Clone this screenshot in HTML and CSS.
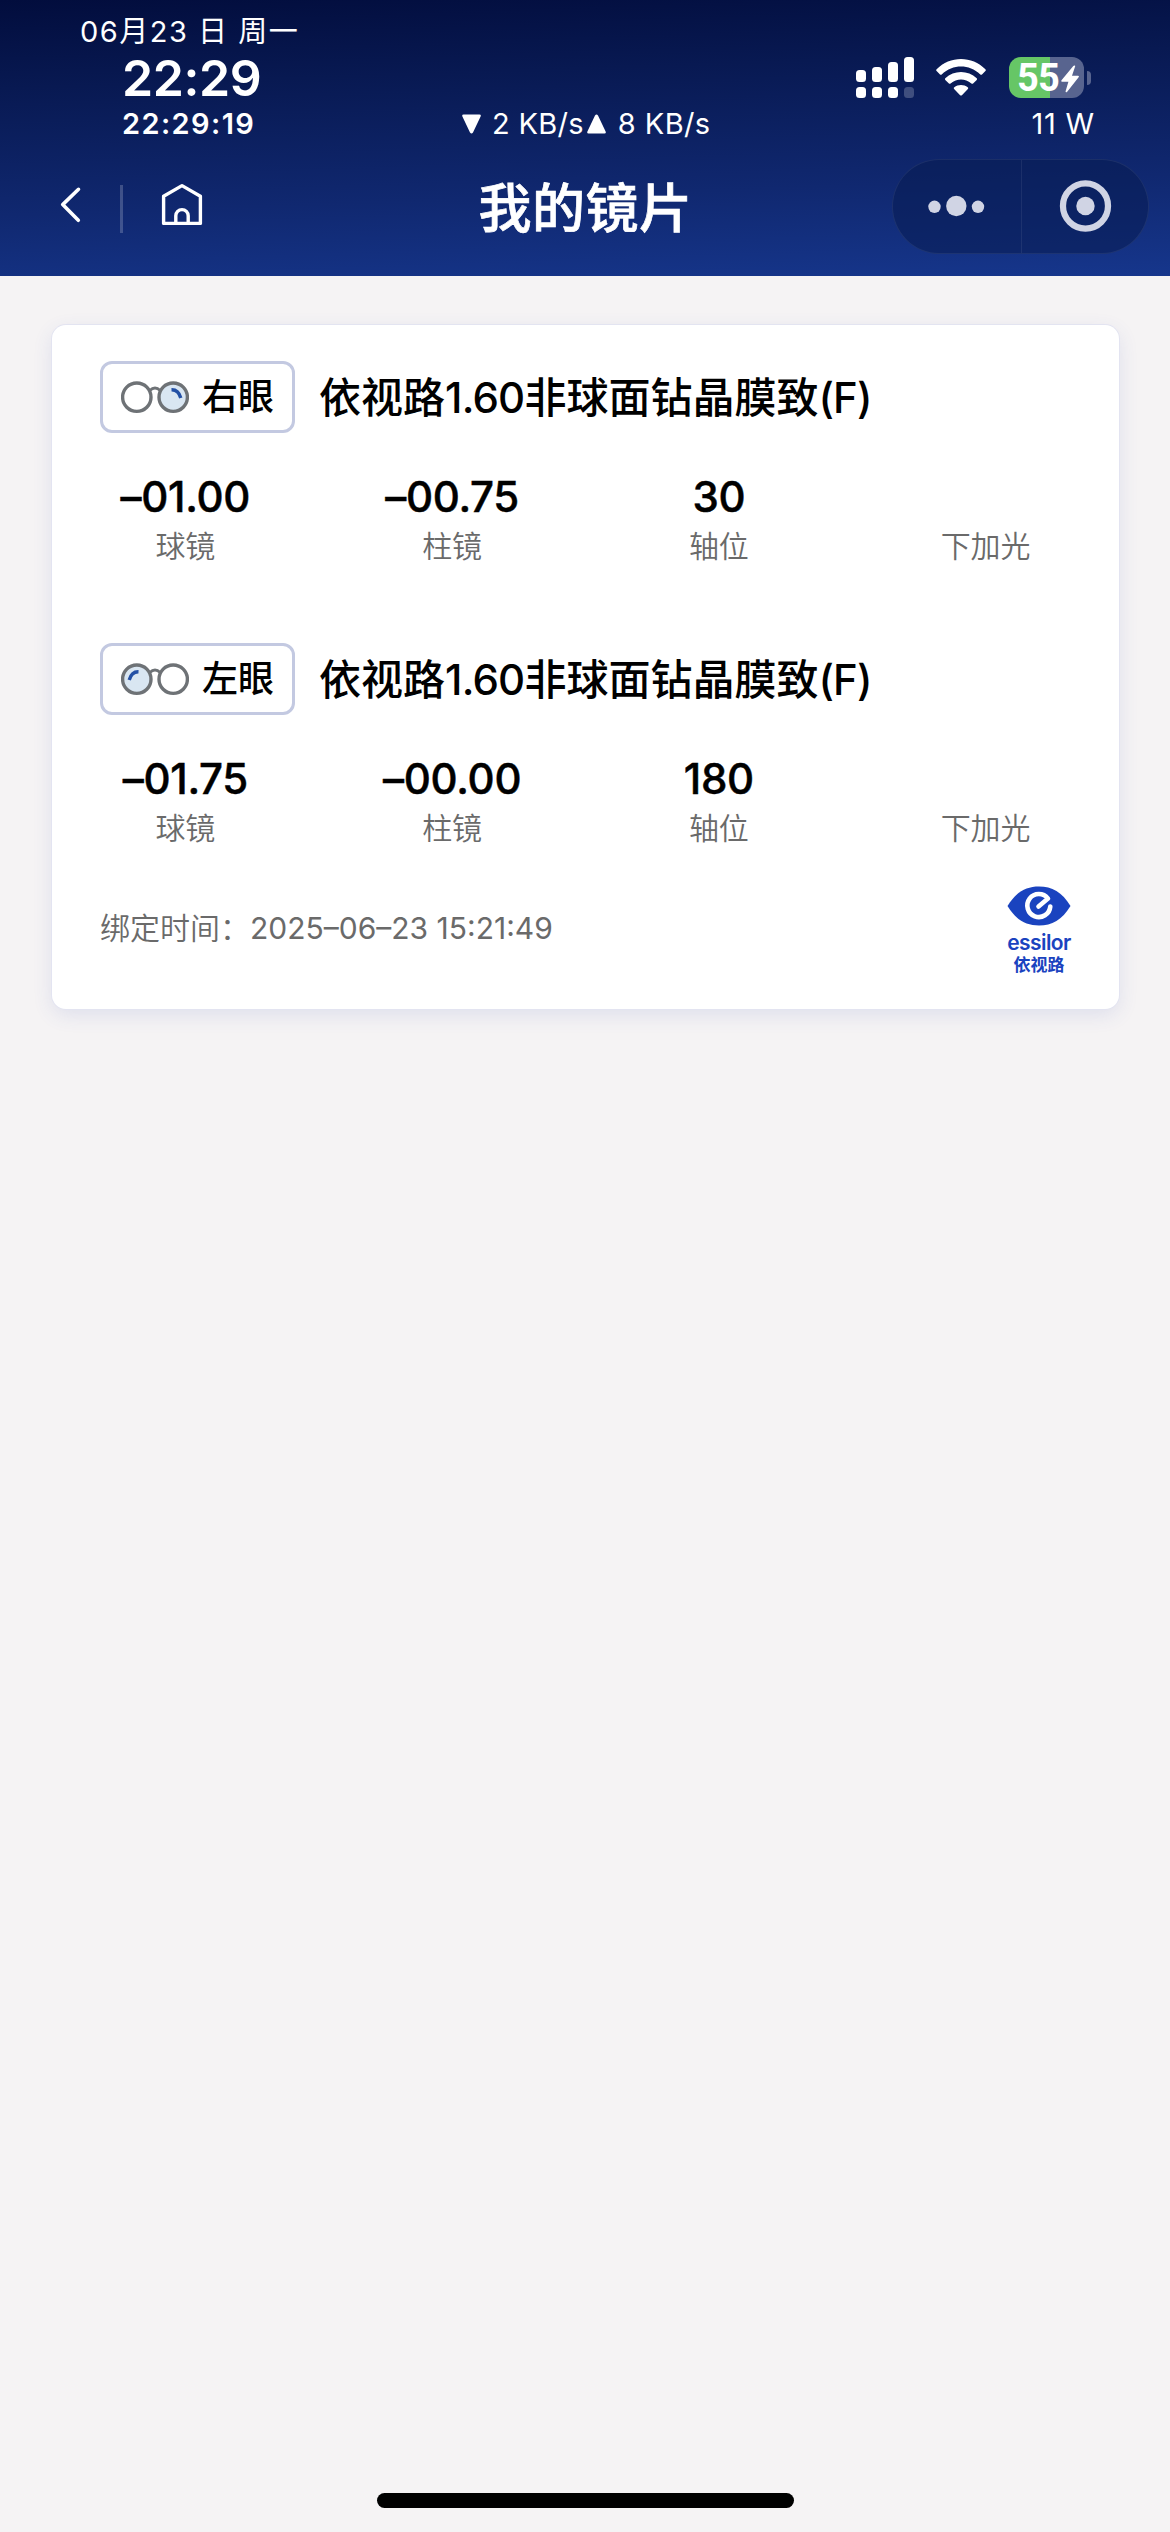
FILE: index.html
```html
<!DOCTYPE html>
<html lang="zh-CN">
<head>
<meta charset="utf-8">
<title>我的镜片</title>
<link rel="stylesheet" href="styles.css">
</head>
<body>
<header class="header">
  <div class="status">
    <div class="date">06月23 日 周一</div>
    <div class="clock">22:29</div>
    <div class="indicators">
      <svg class="signal" width="58" height="42" viewBox="0 0 58 42" fill="#fff">
        <rect x="0" y="13" width="10" height="12" rx="3.5"/><rect x="16" y="10" width="10" height="15" rx="3.5"/><rect x="32" y="5" width="10" height="20" rx="3.5"/><rect x="48" y="0" width="10" height="25" rx="3.5"/>
        <rect x="0" y="30" width="10" height="11" rx="3.5"/><rect x="16" y="30" width="10" height="11" rx="3.5"/><rect x="32" y="30" width="10" height="11" rx="3.5"/><rect x="48" y="30" width="10" height="11" rx="3.5" opacity=".22"/>
      </svg>
      <svg class="wifi" width="50" height="42" viewBox="0 0 50 42" fill="#fff">
        <path d="M.6 11.3C14-2.600 36-2.600 49.400 11.300Q50.200 12.200 49.400 13L46 16.400Q45.200 17.200 44.300 16.400C33 5.800 17 5.800 5.700 16.400Q4.800 17.200 4 16.400L.6 13Q-.2 12.200.6 11.300Z"/>
        <path d="M9.300 20.200C18 12 32 12 40.700 20.200Q41.600 21 40.700 21.900L37.100 25.500Q36.300 26.200 35.400 25.500C29 20 21 20 14.600 25.500Q13.700 26.200 12.900 25.500L9.300 21.900Q8.400 21 9.300 20.200Z"/>
        <path d="M18.300 29.200C22 26.200 28 26.200 31.700 29.200Q32.800 30 31.900 31L25.900 37.200Q25 38 24.100 37.200L18.100 31Q17.200 30 18.300 29.200Z"/>
      </svg>
      <div class="battery">
        <div class="battery-body"><span class="battery-num">55</span><svg width="18" height="28" viewBox="0 0 18 28" fill="#fff"><path d="M13.300.4Q14.600.2 14.100 1.600L11 10.800H17Q18.500 11 17.600 12.300L6 26.900Q4.500 28 4.600 26.300L7.400 16.800H1Q-.2 16.600.5 15.300L12.300 1Z"/></svg></div>
        <div class="battery-cap"></div>
      </div>
    </div>
    <div class="seconds">22:29:19</div>
    <div class="traffic">
      <svg width="19" height="20" viewBox="0 0 19 20" fill="#fff"><path d="M1.500.5H17.500Q19.400.7 18.600 2.400L11 18.600Q9.500 20.600 8 18.600L.4 2.400Q-.3.7 1.500.5Z"/></svg>
      <span class="down">2 KB/s</span>
      <svg width="19" height="20" viewBox="0 0 19 20" fill="#fff"><path d="M1.500 19.500H17.500Q19.400 19.300 18.600 17.600L11 1.400Q9.500-.6 8 1.400L.4 17.600Q-.3 19.300 1.500 19.500Z"/></svg>
      <span class="up">8 KB/s</span>
    </div>
    <div class="watt">11 W</div>
  </div>
  <nav class="nav">
    <div class="nav-left">
      <svg class="back" width="22" height="38" viewBox="0 0 22 38" fill="none" stroke="#fff" stroke-width="3.600" stroke-linecap="round" stroke-linejoin="round"><path d="M18.500 3.300L2.700 18.600L18.300 34.300"/></svg>
      <span class="split"></span>
      <svg class="home" width="42" height="44" viewBox="0 0 42 44" fill="none" stroke="#fff" stroke-width="3.400" stroke-linejoin="round"><path d="M2.600 13.300L21 2.600L39.400 13.300V40.400H2.600Z"/><path d="M14.800 40.400V32.800A6.200 6.200 0 0 1 27.200 32.800V40.400"/></svg>
    </div>
    <h1 class="page-title">我的镜片</h1>
    <div class="capsule">
      <svg width="128" height="93" viewBox="0 0 128 93" fill="#d0d4e4"><circle cx="41.500" cy="46.800" r="6.200"/><circle cx="63.300" cy="46" r="10.200"/><circle cx="85" cy="46.800" r="6.200"/></svg>
      <svg class="capsule-close" width="126" height="93" viewBox="0 0 126 93"><circle cx="64" cy="46" r="22.700" fill="none" stroke="#d0d4e4" stroke-width="6.300"/><circle cx="64" cy="46" r="9.300" fill="#d0d4e4"/></svg>
    </div>
  </nav>
</header>

<main class="card">
  <section class="eye">
    <div class="eye-head">
      <div class="badge">
        <svg width="68" height="34" viewBox="0 0 68 34" fill="none" stroke="#6e7276" stroke-width="3.400"><circle cx="15.800" cy="17.200" r="14.200"/><circle cx="52.200" cy="17.200" r="14.200" fill="#d9e6f2"/><path d="M28.800 10.500Q34 5.500 39.200 10.500" stroke-width="3"/><path d="M50.500 9.700Q57.500 9.500 59.800 18" stroke="#2350a5"/></svg>
        <span>右眼</span>
      </div>
      <h2 class="lens">依视路<span>1.60</span>非球面钻晶膜致<span>(F)</span></h2>
    </div>
    <dl class="values">
      <div><dd>–01.00</dd><dt>球镜</dt></div>
      <div><dd>–00.75</dd><dt>柱镜</dt></div>
      <div><dd>30</dd><dt>轴位</dt></div>
      <div><dd></dd><dt>下加光</dt></div>
    </dl>
  </section>
  <section class="eye">
    <div class="eye-head">
      <div class="badge">
        <svg width="68" height="34" viewBox="0 0 68 34" fill="none" stroke="#6e7276" stroke-width="3.400"><circle cx="15.800" cy="17.200" r="14.200" fill="#d9e6f2"/><circle cx="52.200" cy="17.200" r="14.200"/><path d="M28.800 10.500Q34 5.500 39.200 10.500" stroke-width="3"/><path d="M17.500 9.700Q10.500 9.500 8.200 18" stroke="#2350a5"/></svg>
        <span>左眼</span>
      </div>
      <h2 class="lens">依视路<span>1.60</span>非球面钻晶膜致<span>(F)</span></h2>
    </div>
    <dl class="values">
      <div><dd>–01.75</dd><dt>球镜</dt></div>
      <div><dd>–00.00</dd><dt>柱镜</dt></div>
      <div><dd>180</dd><dt>轴位</dt></div>
      <div><dd></dd><dt>下加光</dt></div>
    </dl>
  </section>
  <footer class="card-foot">
    <p class="bound"><span>绑定时间：</span><time>2025–06–23 15:21:49</time></p>
    <div class="brand">
      <svg width="64" height="40" viewBox="0 0 64 40"><path d="M.5 20C9 6 19 .5 32 .5S55 6 63.500 20C55 34 45 39.500 32 39.500S9 34 .5 20Z" fill="#1a43bf"/><path d="M31.500 20.500L41 12.600A11.500 11.500 0 1 0 43.300 20.500" fill="none" stroke="#fff" stroke-width="4.600" stroke-linecap="round" stroke-linejoin="round"/></svg>
      <span class="brand-en">essilor</span>
      <span class="brand-cn">依视路</span>
    </div>
  </footer>
</main>
<div class="home-bar"></div>
</body>
</html>
```
FILE: styles.css
```css
* { box-sizing: border-box; }
body {
  margin: 0;
  width: 1170px;
  height: 2532px;
  display: flex;
  flex-direction: column;
  background: #f5f3f4;
  color: #000;
  font-family: Inter, "Noto Sans CJK SC", sans-serif;
}
h1, h2, p, dl, dd, dt { margin: 0; }
svg { display: block; flex: none; }

.header {
  height: 276px;
  padding-top: 14px;
  background: linear-gradient(178deg, #020d3d 0%, #081952 28%, #102870 68%, #16368c 100%);
  color: #fff;
}
.status {
  display: grid;
  grid-template-columns: 380px 1fr 380px;
  grid-template-rows: 36px 55px 38px;
  align-items: center;
  font-size: 29px;
  line-height: 36px;
  white-space: nowrap;
}
.date { grid-column: 1 / -1; padding-left: 80px; letter-spacing: 1.5px; }
.clock { padding-left: 122px; font-size: 50px; font-weight: 600; letter-spacing: -.4px; }
.seconds { padding-left: 122px; font-weight: 600; letter-spacing: 1.4px; }
.indicators { grid-column: 3; display: flex; align-items: flex-start; height: 41px; padding-left: 66px; }
.wifi { margin: 1px 23px 0 22px; }
.battery { display: flex; align-items: center; gap: 3px; }
.battery-body {
  width: 75px;
  height: 41px;
  border-radius: 12px;
  display: flex;
  align-items: center;
  padding-left: 8px;
  background: linear-gradient(90deg, #66c666 0 41px, #58648f 41px);
}
.battery-body svg { margin: 2px 0 0 1px; }
.battery-num { width: 43px; padding-top: 2px; font: 700 38px/41px Roboto, sans-serif; letter-spacing: -.8px; }
.battery-cap { width: 4px; height: 14px; border-radius: 0 5px 5px 0; background: #58648f; }
.traffic { display: flex; align-items: center; padding-left: 82px; }
.down { margin: 0 3px 0 11px; letter-spacing: .3px; }
.up { margin-left: 12px; letter-spacing: .4px; }
.watt { padding-right: 75px; text-align: right; letter-spacing: .8px; }

.nav {
  display: grid;
  grid-template-columns: 278px 1fr 278px;
  align-items: center;
  height: 128px;
}
.nav-left { display: flex; align-items: center; padding-left: 60px; }
.back { margin-top: -5px; }
.split { width: 3px; height: 48px; margin: 4px 38px 0; background: rgba(255, 255, 255, .2); }
.home { margin-top: -5px; }
.page-title { padding: 3px 0 0 1px; text-align: center; font-size: 53px; font-weight: 500; line-height: 60px; letter-spacing: .5px; -webkit-text-stroke: .7px #fff; }
.capsule {
  display: flex;
  width: 257px;
  height: 95px;
  margin-top: -1px;
  border: 1px solid rgba(255, 255, 255, .07);
  border-radius: 48px;
  background: rgba(8, 28, 82, .55);
}
.capsule-close { border-left: 1px solid rgba(255, 255, 255, .07); }

.card {
  width: 1067px;
  height: 684px;
  margin: 49px 0 0 52px;
  padding-top: 36px;
  border-radius: 14px;
  background: #fff;
  box-shadow: 0 0 0 1px #e3e4f1, 0 6px 20px rgba(60, 80, 180, .12);
}
.eye { height: 282px; }
.eye-head { display: flex; align-items: center; gap: 24px; padding-left: 48px; }
.badge {
  display: flex;
  align-items: center;
  gap: 13px;
  width: 195px;
  height: 72px;
  padding-left: 18px;
  border: 3px solid #c3c9e1;
  border-radius: 12px;
  font-size: 36px;
  font-weight: 500;
  line-height: 50px;
}
.lens { padding-top: 2px; font-size: 42px; font-weight: 500; line-height: 60px; white-space: nowrap; }
.lens span { letter-spacing: -.8px; }
.values { display: grid; grid-template-columns: repeat(4, 1fr); padding-top: 36px; text-align: center; }
.values dd { height: 56px; font-size: 42px; font-weight: 500; line-height: 56px; letter-spacing: -.3px; -webkit-text-stroke: .5px #000; }
.values dt { height: 42px; color: #6a6a6a; font-size: 30px; font-weight: 350; line-height: 42px; }
.card-foot { display: flex; justify-content: space-between; align-items: flex-start; padding: 0 48px; }
.bound { display: flex; align-items: center; height: 42px; margin-top: -18px; color: #6a6a6a; font-size: 30px; font-weight: 350; line-height: 42px; }
.bound time { font-weight: 400; }
.brand { display: flex; flex-direction: column; align-items: center; width: 64px; margin-top: -39px; color: #1a43bf; }
.brand-en { margin-top: 6px; font: 600 21px/22px Inter, sans-serif; letter-spacing: -.6px; }
.brand-cn { font-size: 17px; font-weight: 700; line-height: 22px; }
.home-bar { width: 417px; height: 15px; margin: auto auto 24px 377px; border-radius: 8px; background: #000; }
```
